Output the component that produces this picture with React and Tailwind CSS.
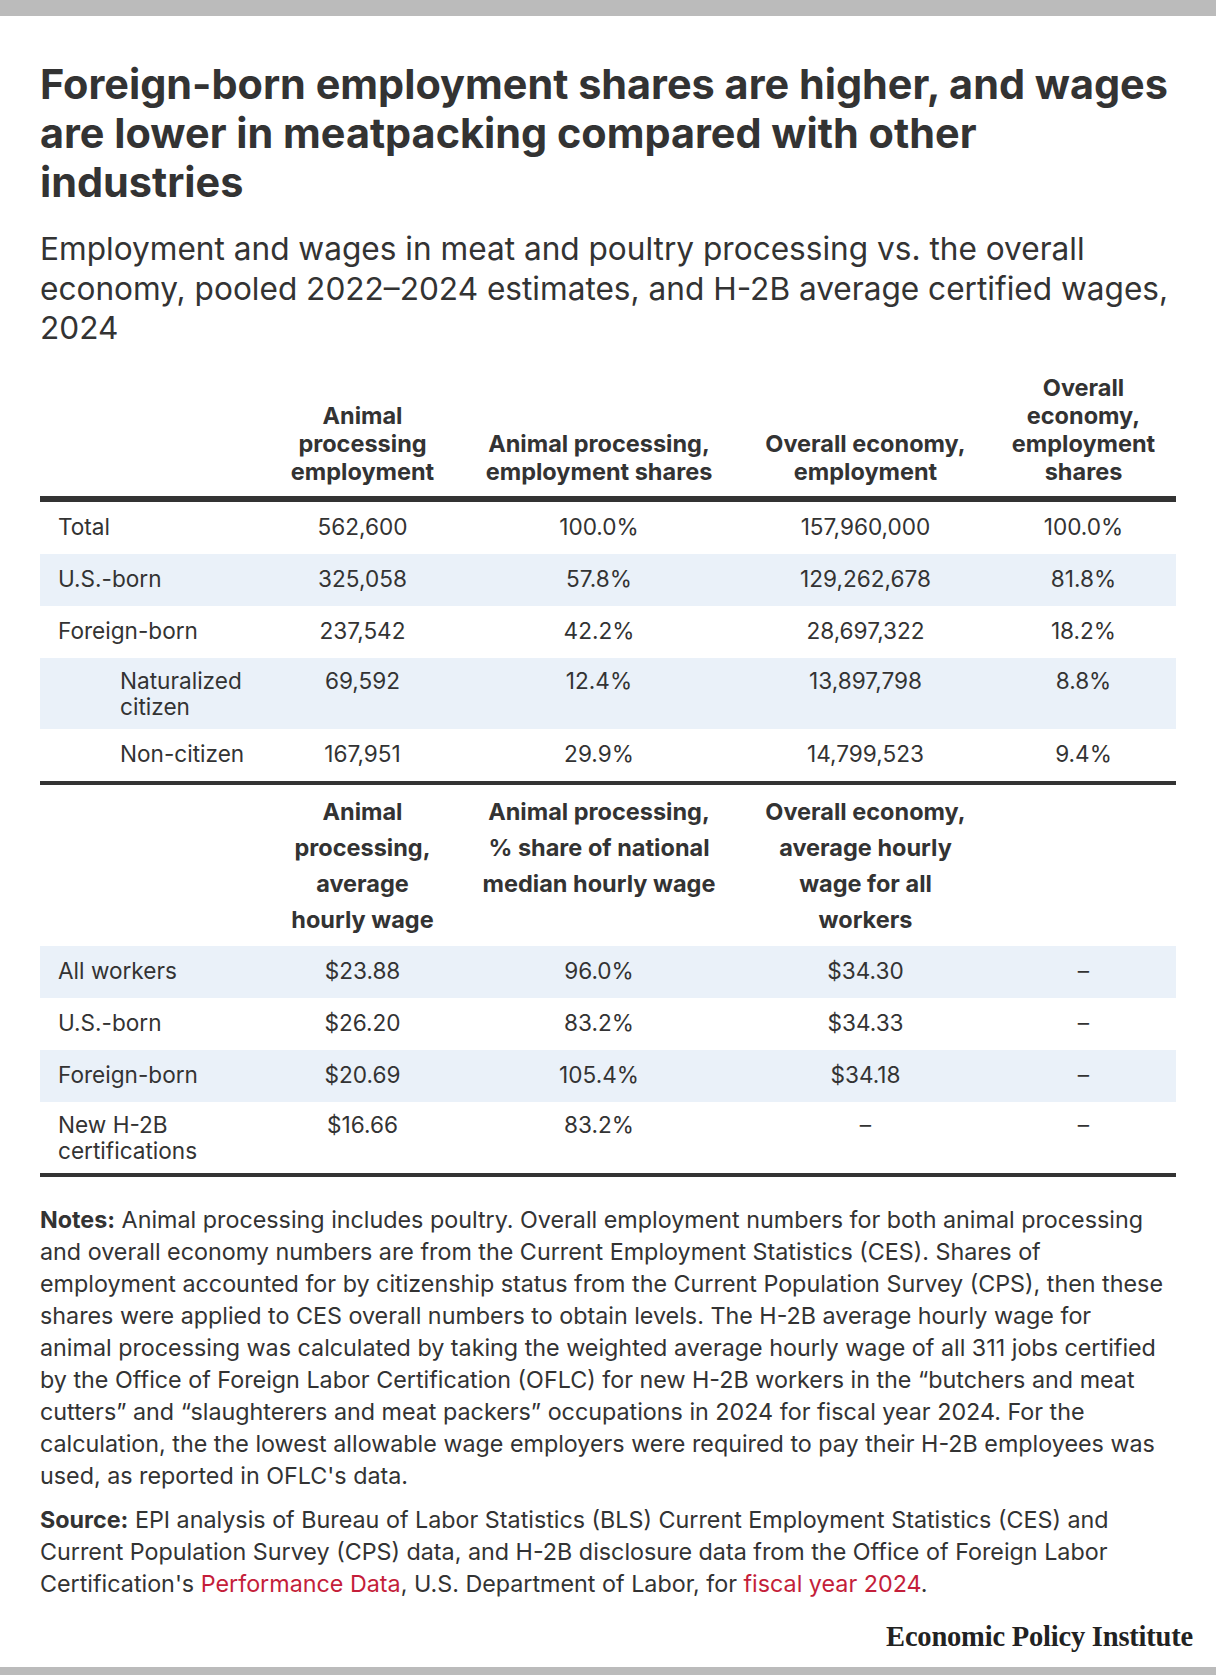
import React from 'react';

const cols = 'grid grid-cols-[227px_191px_282px_251px_185px]';

const empRows = [
  { label: 'Total', vals: ['562,600', '100.0%', '157,960,000', '100.0%'] },
  { label: 'U.S.-born', vals: ['325,058', '57.8%', '129,262,678', '81.8%'], shaded: true },
  { label: 'Foreign-born', vals: ['237,542', '42.2%', '28,697,322', '18.2%'] },
  { label: ['Naturalized', 'citizen'], vals: ['69,592', '12.4%', '13,897,798', '8.8%'], shaded: true, indent: true },
  { label: 'Non-citizen', vals: ['167,951', '29.9%', '14,799,523', '9.4%'], indent: true },
];

const wageRows = [
  { label: 'All workers', vals: ['$23.88', '96.0%', '$34.30', '–'], shaded: true },
  { label: 'U.S.-born', vals: ['$26.20', '83.2%', '$34.33', '–'] },
  { label: 'Foreign-born', vals: ['$20.69', '105.4%', '$34.18', '–'], shaded: true },
  { label: ['New H-2B', 'certifications'], vals: ['$16.66', '83.2%', '–', '–'] },
];

function Lines({ lines }) {
  const arr = Array.isArray(lines) ? lines : [lines];
  return arr.map((l, i) => (
    <span key={i} className="block whitespace-nowrap">{l}</span>
  ));
}

function HeadRow({ heads, leading, pad, align }) {
  return (
    <div className={`${cols} ${align} ${pad} text-[23.5px] ${leading} font-bold text-center`}>
      <div />
      {heads.map((h, i) => (
        <div key={i}>
          <Lines lines={h} />
        </div>
      ))}
    </div>
  );
}

function BodyRow({ row }) {
  const twoLine = Array.isArray(row.label);
  return (
    <div className={`${cols} items-start min-h-[52px] ${twoLine ? 'pt-[10px] pb-[9px]' : 'pt-[12px] pb-[7px]'} text-[22.6px] leading-[26px] ${row.shaded ? 'bg-[#eaf1f9]' : 'bg-white'}`}>
      <div className={row.indent ? 'pl-[80px]' : 'pl-[18px]'}>
        <Lines lines={row.label} />
      </div>
      {row.vals.map((v, i) => (
        <div key={i} className="text-center">{v}</div>
      ))}
    </div>
  );
}

export default function App() {
  return (
    <div className="w-[1216px] bg-white text-[#333333] font-['Inter',sans-serif]">
      <div className="h-[16px] bg-[#bbbbbb]" />
      <div className="px-[40px]">
        <h1 className="pt-[44px] text-[41.4px] leading-[49px] font-bold">
          <Lines lines={[
            'Foreign-born employment shares are higher, and wages',
            'are lower in meatpacking compared with other',
            'industries',
          ]} />
        </h1>
        <p className="mt-[22px] text-[31.6px] leading-[39.5px]">
          <Lines lines={[
            'Employment and wages in meat and poultry processing vs. the overall',
            'economy, pooled 2022–2024 estimates, and H-2B average certified wages,',
            '2024',
          ]} />
        </p>

        <div className="mt-[16px]">
          <HeadRow
            align="items-end"
            pad="pt-[10px] pb-[10px]"
            leading="leading-[28px]"
            heads={[
              ['Animal', 'processing', 'employment'],
              ['Animal processing,', 'employment shares'],
              ['Overall economy,', 'employment'],
              ['Overall', 'economy,', 'employment', 'shares'],
            ]}
          />
          <div className="h-[6px] bg-[#333333]" />
          {empRows.map((r, i) => <BodyRow key={i} row={r} />)}
          <div className="h-[4px] bg-[#333333]" />
          <HeadRow
            align="items-start"
            pad="pt-[9px] pb-[8px]"
            leading="leading-[36px]"
            heads={[
              ['Animal', 'processing,', 'average', 'hourly wage'],
              ['Animal processing,', '% share of national', 'median hourly wage'],
              ['Overall economy,', 'average hourly', 'wage for all', 'workers'],
              [],
            ]}
          />
          {wageRows.map((r, i) => <BodyRow key={i} row={r} />)}
          <div className="h-[4px] bg-[#333333]" />
        </div>

        <div className="mt-[27px] text-[23.3px] leading-[32px]">
          <p>
            <span className="block whitespace-nowrap"><b className="font-bold">Notes:</b> Animal processing includes poultry. Overall employment numbers for both animal processing</span>
            <Lines lines={[
              'and overall economy numbers are from the Current Employment Statistics (CES). Shares of',
              'employment accounted for by citizenship status from the Current Population Survey (CPS), then these',
              'shares were applied to CES overall numbers to obtain levels. The H-2B average hourly wage for',
              'animal processing was calculated by taking the weighted average hourly wage of all 311 jobs certified',
              'by the Office of Foreign Labor Certification (OFLC) for new H-2B workers in the “butchers and meat',
              'cutters” and “slaughterers and meat packers” occupations in 2024 for fiscal year 2024. For the',
              'calculation, the the lowest allowable wage employers were required to pay their H-2B employees was',
              "used, as reported in OFLC's data.",
            ]} />
          </p>
          <p className="mt-[12px]">
            <span className="block whitespace-nowrap"><b className="font-bold">Source:</b> EPI analysis of Bureau of Labor Statistics (BLS) Current Employment Statistics (CES) and</span>
            <span className="block whitespace-nowrap">Current Population Survey (CPS) data, and H-2B disclosure data from the Office of Foreign Labor</span>
            <span className="block whitespace-nowrap">
              Certification's <a className="text-[#c41e3a]">Performance Data</a>, U.S. Department of Labor, for <a className="text-[#c41e3a]">fiscal year 2024</a>.
            </span>
          </p>
        </div>

        <div className="mt-[21px] mr-[-17px] flex justify-end">
          <span className="font-['Liberation_Serif',serif] font-bold text-[28.5px] leading-[32px] tracking-[-0.2px] text-[#222222]">
            Economic Policy Institute
          </span>
        </div>
      </div>
      <div className="mt-[14px] h-[8px] bg-[#bbbbbb]" />
    </div>
  );
}
